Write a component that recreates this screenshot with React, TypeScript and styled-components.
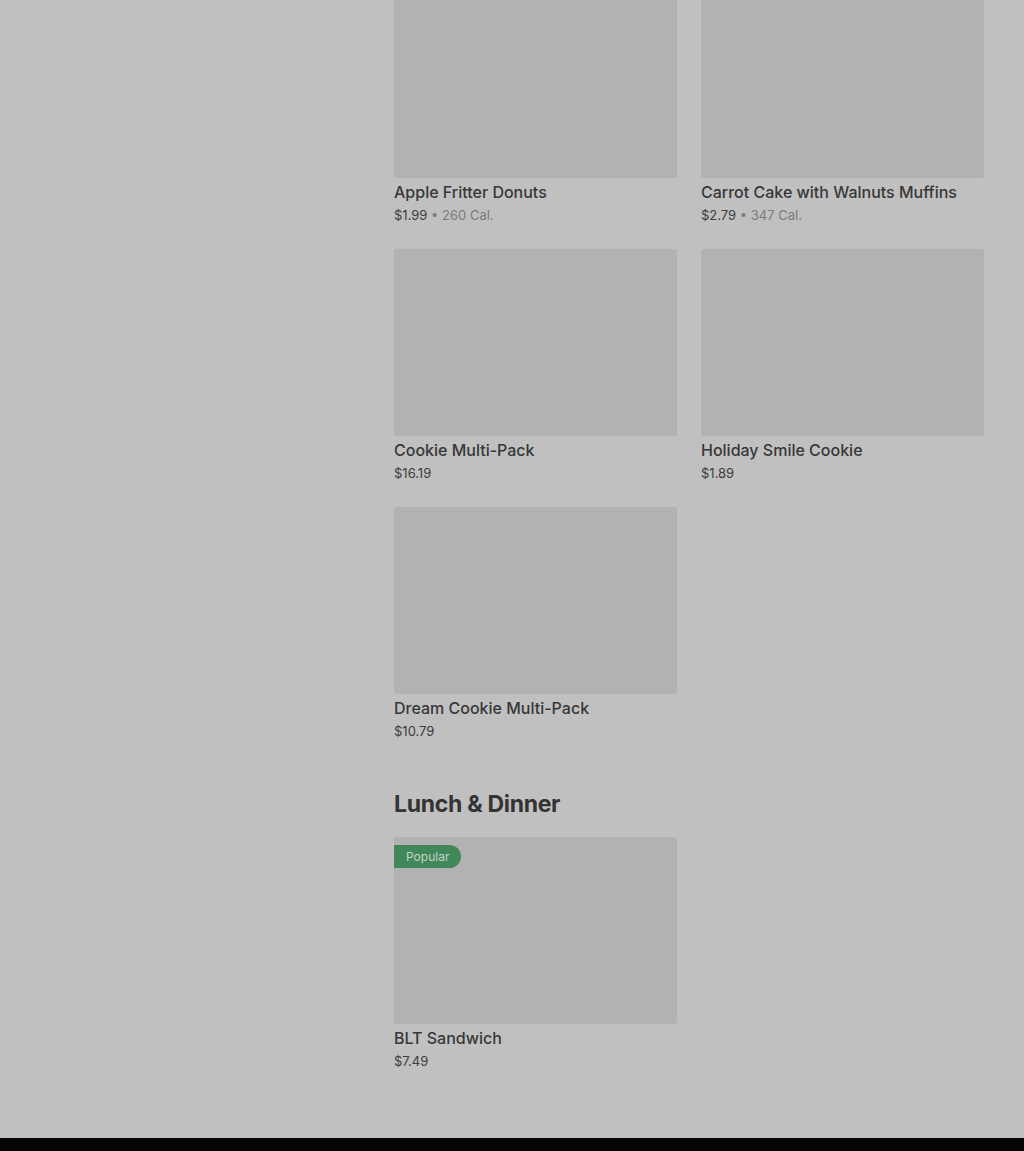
import styled, { createGlobalStyle } from "styled-components";

const GlobalStyle = createGlobalStyle`
  html, body {
    margin: 0;
    padding: 0;
    background: #c0c0c0;
    font-family: Inter, "Liberation Sans", sans-serif;
    color: #353535;
  }
`;

const Page = styled.div`
  display: grid;
  grid-template-columns: 394px 590px 1fr;
  min-height: 1151px;
  overflow: hidden;
`;

const Sidebar = styled.aside``;

const Main = styled.main`
  display: flex;
  flex-direction: column;
  margin-top: -9px;
`;

const Grid = styled.div`
  display: grid;
  grid-template-columns: repeat(2, 283px);
  column-gap: 24px;
  row-gap: 24px;
`;

const Card = styled.div`
  display: flex;
  flex-direction: column;
`;

const Thumb = styled.div`
  position: relative;
  height: 187px;
  background: #b2b2b2;
  border-radius: 2px;
`;

const Badge = styled.span`
  position: absolute;
  top: 8px;
  left: 0;
  padding: 0 12px;
  height: 23px;
  line-height: 23px;
  font-size: 12px;
  color: #c3d3c8;
  background: #418759;
  border-radius: 0 12px 12px 0;
`;

const Name = styled.div`
  margin-top: 4px;
  font-size: 16px;
  line-height: 20px;
  font-weight: 450;
  color: #373737;
`;

const Meta = styled.div`
  margin-top: 3px;
  font-size: 13px;
  line-height: 20px;
  color: #3c3c3c;
`;

const Cal = styled.span`
  color: #7b7b7b;
`;

const Heading = styled.h2`
  margin: 47px 0 17px;
  font-size: 23px;
  line-height: 32px;
  font-weight: 700;
  letter-spacing: -0.3px;
  color: #333;
`;

const Footer = styled.footer`
  margin-top: 66px;
  height: 13px;
  background: #050505;
  grid-column: 1 / -1;
`;

type Item = { name: string; price: string; cal?: string; popular?: boolean };

const bakery: Item[] = [
  { name: "Apple Fritter Donuts", price: "$1.99", cal: "260 Cal." },
  { name: "Carrot Cake with Walnuts Muffins", price: "$2.79", cal: "347 Cal." },
  { name: "Cookie Multi-Pack", price: "$16.19" },
  { name: "Holiday Smile Cookie", price: "$1.89" },
  { name: "Dream Cookie Multi-Pack", price: "$10.79" },
];

const lunch: Item[] = [{ name: "BLT Sandwich", price: "$7.49", popular: true }];

function MenuCard({ item }: { item: Item }) {
  return (
    <Card>
      <Thumb>{item.popular && <Badge>Popular</Badge>}</Thumb>
      <Name>{item.name}</Name>
      <Meta>
        {item.price}
        {item.cal && <Cal> • {item.cal}</Cal>}
      </Meta>
    </Card>
  );
}

export default function App() {
  return (
    <>
      <GlobalStyle />
      <Page>
        <Sidebar />
        <Main>
          <Grid>
            {bakery.map((it) => (
              <MenuCard key={it.name} item={it} />
            ))}
          </Grid>
          <Heading>Lunch &amp; Dinner</Heading>
          <Grid>
            {lunch.map((it) => (
              <MenuCard key={it.name} item={it} />
            ))}
          </Grid>
        </Main>
        <Footer />
      </Page>
    </>
  );
}
